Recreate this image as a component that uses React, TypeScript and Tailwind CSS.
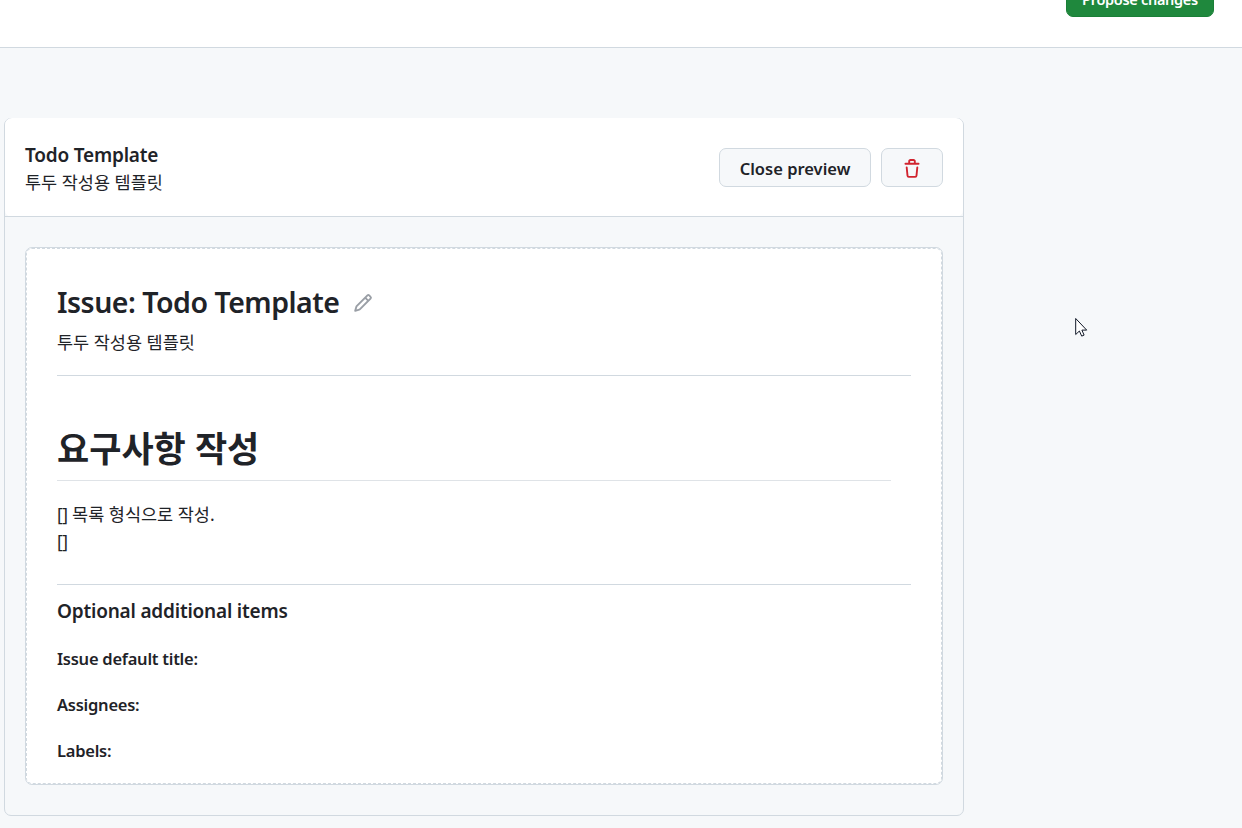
import type { ReactNode } from "react";

function TrashIcon() {
  return (
    <svg width="20" height="20" viewBox="0 0 16 16" fill="currentColor" className="mt-0.5 block">
      <path d="M11 1.75V3h2.25a.75.75 0 0 1 0 1.5H2.75a.75.75 0 0 1 0-1.5H5V1.75C5 .784 5.784 0 6.75 0h2.5C10.216 0 11 .784 11 1.75ZM4.496 6.675l.66 6.6a.25.25 0 0 0 .249.225h5.19a.25.25 0 0 0 .249-.225l.66-6.6a.75.75 0 0 1 1.492.149l-.66 6.6A1.748 1.748 0 0 1 10.595 15h-5.19a1.75 1.75 0 0 1-1.741-1.575l-.66-6.6a.75.75 0 1 1 1.492-.15ZM6.5 1.75V3h3V1.75a.25.25 0 0 0-.25-.25h-2.5a.25.25 0 0 0-.25.25Z" />
    </svg>
  );
}

function PencilIcon() {
  return (
    <svg width="20" height="20" viewBox="0 0 16 16" fill="currentColor" className="block">
      <path d="M11.013 1.427a1.75 1.75 0 0 1 2.474 0l1.086 1.086a1.75 1.75 0 0 1 0 2.474l-8.61 8.61c-.21.21-.47.364-.756.445l-3.251.93a.75.75 0 0 1-.927-.928l.929-3.25c.081-.286.235-.547.445-.758l8.61-8.61Zm.176 4.823L9.75 4.81l-6.286 6.287a.253.253 0 0 0-.064.108l-.558 1.953 1.953-.558a.253.253 0 0 0 .108-.064Zm1.238-3.763a.25.25 0 0 0-.354 0L10.811 3.75l1.439 1.44 1.263-1.263a.25.25 0 0 0 0-.354Z" />
    </svg>
  );
}

function Field({ children }: { children: ReactNode }) {
  return (
    <div className="h-[46px] w-max text-[16.5px] leading-[26px] font-semibold tracking-[-0.25px]">{children}</div>
  );
}

export default function App() {
  return (
    <div className="relative h-[828px] w-[1242px] overflow-hidden bg-[#f6f8fa] font-['Noto_Sans','Noto_Sans_CJK_KR',sans-serif] text-[#1f2328]">
      <header className="flex h-12 items-start justify-end border-b border-[#d1d9e0] bg-white pr-7">
        <button className="-mt-[18px] flex h-[35px] w-[148px] items-center justify-center rounded-[7px] border border-[#1a7f37] bg-[#1f883d] pb-0.5 text-[14.5px] leading-5 font-semibold whitespace-nowrap text-white">
          <span className="tracking-[-0.3px]">Propose changes</span>
        </button>
      </header>

      <section className="mt-[70px] ml-1 h-[698px] w-[960px] rounded-[7px] border border-[#d1d9e0]">
        <div className="-mt-px flex h-[99px] items-start justify-between rounded-[7px] bg-white pr-5 pl-5">
          <div className="pt-[23px]">
            <h3 className="w-max text-[19px] leading-[28px] font-semibold tracking-[-0.2px]">Todo Template</h3>
            <p className="w-max text-[17.5px] leading-[27px]">투두 작성용 템플릿</p>
          </div>
          <div className="flex gap-[10px] pt-[30px]">
            <button className="flex h-[39px] w-[152px] items-center justify-center rounded-[7px] border border-[#d1d9e0] bg-[#f6f8fa] pt-[3px] text-[16.5px] leading-6 font-semibold whitespace-nowrap">
              Close preview
            </button>
            <button className="flex h-[39px] w-[62px] items-center justify-center rounded-[7px] border border-[#d1d9e0] bg-[#f6f8fa] text-[#d1242f]">
              <TrashIcon />
            </button>
          </div>
        </div>
        <div className="-mt-px border-t border-[#d1d9e0] px-5 pt-[30px]">
          <div className="h-[538px] rounded-[7px] border border-[#d1d9e0] bg-white">
            <div className="h-full rounded-[6px] border border-dashed border-[#d1d9e0] px-[30px]">
              <div className="flex items-center pt-[32px]">
                <h2 className="w-[296px] pb-[2px] text-[28.5px] leading-[42px] font-semibold tracking-[-0.5px] whitespace-nowrap">
                  Issue: Todo Template
                </h2>
                <span className="text-[#9a9fa6]">
                  <PencilIcon />
                </span>
              </div>
              <p className="mt-[4px] w-max text-[17.5px] leading-[27px]">투두 작성용 템플릿</p>
              <div className="mt-[19px] h-px bg-[#d1d9e0]" />
              <div className="mr-5 flex h-[105px] items-end border-b border-[#dfe3e7]">
                <h1 className="mb-[9px] w-max text-[35px] leading-[44px] font-bold">요구사항 작성</h1>
              </div>
              <p className="mt-[20px] w-max text-[17.5px] leading-[27px]">
                <span className="tracking-[-0.5px]">[]</span> 목록 형식으로 작성.
                <br />
                <span className="tracking-[-0.5px]">[]</span>
              </p>
              <div className="mt-[29px] h-px bg-[#d1d9e0]" />
              <h3 className="mt-[13px] mb-[21px] w-max text-[19px] leading-[27px] font-semibold tracking-[-0.2px]">
                Optional additional items
              </h3>
              <Field>Issue default title:</Field>
              <Field>Assignees:</Field>
              <Field>Labels:</Field>
            </div>
          </div>
        </div>
      </section>

      <svg className="absolute top-[317px] left-[1075px]" width="13" height="21" viewBox="0 0 13 21">
        <path d="M.7 1.5v16l3.7-3.5 2.3 5.1 2.4-1-2.2-5h4.8Z" fill="#fff" stroke="#111827" strokeWidth="1" />
      </svg>
    </div>
  );
}
